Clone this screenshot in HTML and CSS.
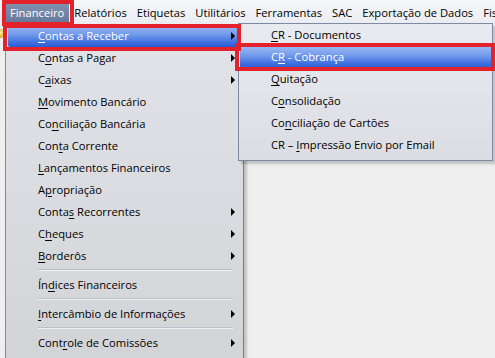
FILE: index.html
```html
<!DOCTYPE html>
<html lang="pt-BR">
<head>
<meta charset="utf-8">
<title>Financeiro</title>
<link rel="stylesheet" href="styles.css">
</head>
<body>
<div class="screen">
  <nav class="menubar">
    <span class="mb-item active">Financeiro</span>
    <span class="mb-item">Relatórios</span>
    <span class="mb-item">Etiquetas</span>
    <span class="mb-item">Utilitários</span>
    <span class="mb-item">Ferramentas</span>
    <span class="mb-item">SAC</span>
    <span class="mb-item">Exportação de Dados</span>
    <span class="mb-item">Fiscal</span>
  </nav>
  <div class="workspace">
    <span class="app-icon"></span>
  </div>

  <div class="menu main-menu">
    <div class="mi hl"><span><u>C</u>ontas a Receber</span><i class="arrow"></i></div>
    <div class="mi"><span>C<u>o</u>ntas a Pagar</span><i class="arrow"></i></div>
    <div class="mi"><span>C<u>a</u>ixas</span><i class="arrow"></i></div>
    <div class="mi"><span><u>M</u>ovimento Bancário</span></div>
    <div class="mi"><span>Co<u>n</u>ciliação Bancária</span></div>
    <div class="mi"><span>Con<u>t</u>a Corrente</span></div>
    <div class="mi"><span><u>L</u>ançamentos Financeiros</span></div>
    <div class="mi"><span>A<u>p</u>ropriação</span></div>
    <div class="mi"><span>Conta<u>s</u> Recorrentes</span><i class="arrow"></i></div>
    <div class="mi"><span>C<u>h</u>eques</span><i class="arrow"></i></div>
    <div class="mi"><span><u>B</u>orderôs</span><i class="arrow"></i></div>
    <div class="sep"></div>
    <div class="mi"><span>Ín<u>d</u>ices Financeiros</span></div>
    <div class="sep"></div>
    <div class="mi"><span><u>I</u>ntercâmbio de Informações</span><i class="arrow"></i></div>
    <div class="sep"></div>
    <div class="mi"><span>Cont<u>r</u>ole de Comissões</span><i class="arrow"></i></div>
  </div>

  <div class="menu sub-menu">
    <div class="mi"><span><u>C</u>R - Documentos</span></div>
    <div class="mi hl"><span>C<u>R</u> - Cobrança</span></div>
    <div class="mi"><span><u>Q</u>uitação</span></div>
    <div class="mi"><span>C<u>o</u>nsolidação</span></div>
    <div class="mi"><span>Co<u>n</u>ciliação de Cartões</span></div>
    <div class="mi"><span>CR – <u>I</u>mpressão Envio por Email</span></div>
  </div>

  <div class="mark mark-financeiro"></div>
  <div class="mark mark-receber"></div>
  <div class="mark mark-cobranca"></div>
</div>
</body>
</html>
```

FILE: styles.css
```css
* { box-sizing: border-box; }

html, body {
  margin: 0;
  padding: 0;
}

body {
  width: 495px;
  height: 358px;
  overflow: hidden;
  background: #efefef;
  font-family: "Open Sans", "Noto Sans", "DejaVu Sans", sans-serif;
  font-size: 11.2px;
  color: #000;
}

.screen {
  position: relative;
  width: 495px;
  height: 358px;
  overflow: hidden;
  display: flex;
  flex-direction: column;
}

/* ---------- menu bar ---------- */
.menubar {
  display: flex;
  align-items: stretch;
  height: 24px;
  padding: 2px 0 0 5px;
  background: linear-gradient(#f6f7fa, #eaecf1);
  white-space: nowrap;
  overflow: hidden;
}

.mb-item {
  display: flex;
  align-items: center;
  padding: 0 5px 1px;
  height: 21px;
}

.mb-item.active {
  background: linear-gradient(#8494b1, #66789a);
  color: #fff;
}

.workspace {
  flex: 1;
  position: relative;
  background: #efefef;
}

.app-icon {
  position: absolute;
  left: -4px;
  top: 5px;
  width: 8px;
  height: 9px;
  border-radius: 50%;
  background: radial-gradient(circle at 60% 40%, #fff3a8, #e2a21a 70%, #a56a08);
}

/* ---------- drop-down menus ---------- */
.menu {
  position: absolute;
  display: flex;
  flex-direction: column;
  border: 1px solid #7d8aa6;
  box-shadow: 3px 3px 2px rgba(0, 0, 0, 0.18);
}

.main-menu {
  left: 5px;
  top: 24px;
  width: 239px;
  height: 346px;
  padding: 0 2px;
  background: linear-gradient(#e1e3e9, #d9dade 60%, #d2d3d7);
  border-right-color: #6f7c98;
}

.sub-menu {
  left: 238px;
  top: 23px;
  width: 255px;
  height: 138px;
  padding: 0 1px;
  background: linear-gradient(#e9ebf0, #dcdde2);
}

.mi {
  position: relative;
  display: flex;
  align-items: center;
  height: 22px;
  padding-bottom: 2px;
  flex: none;
  white-space: nowrap;
}

.main-menu .mi { padding-left: 30px; }
.sub-menu .mi { padding-left: 31px; }

.mi u {
  text-decoration: underline;
  text-decoration-thickness: 1px;
  text-underline-offset: 2px;
}

.mi.hl {
  color: #fff;
  background: linear-gradient(#9dbcf4, #6f98ea 45%, #3d6fe0 80%, #2a5cd4);
  border-radius: 2px;
}

.arrow {
  position: absolute;
  right: 6px;
  top: 7px;
  width: 0;
  height: 0;
  border-top: 4px solid transparent;
  border-bottom: 4px solid transparent;
  border-left: 4px solid #000;
}

.sep {
  flex: none;
  height: 7px;
  margin: 0 8px 0 30px;
  display: flex;
  align-items: center;
  transform: translateY(-1px);
}

.sep::before {
  content: "";
  display: block;
  width: 100%;
  height: 2px;
  background: linear-gradient(#b9bccb 0 50%, #f4f5f8 50% 100%);
  opacity: 0.9;
}

/* ---------- red annotation boxes ---------- */
.mark {
  position: absolute;
  border: 4px solid #e3222b;
  pointer-events: none;
}

.mark-financeiro {
  left: 2px;
  top: 0;
  width: 72px;
  height: 26px;
}

.mark-receber {
  left: 3px;
  top: 24px;
  width: 238px;
  height: 27px;
}

.mark-cobranca {
  left: 235px;
  top: 43px;
  width: 260px;
  height: 28px;
}
```
